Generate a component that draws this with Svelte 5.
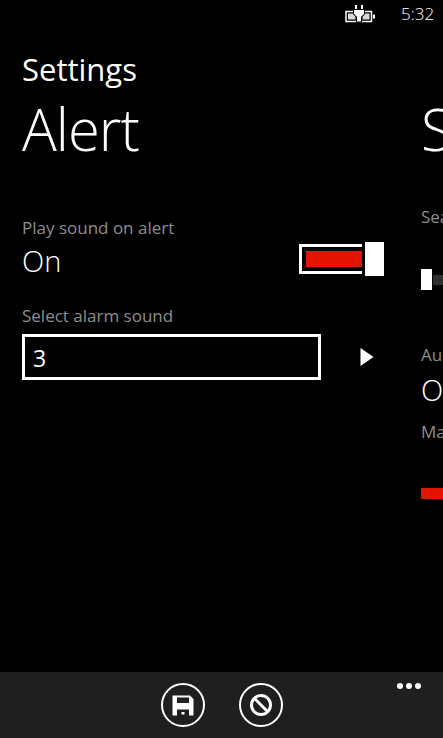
<script>
	let playSound = true;
	let alarmSound = "3";
</script>

<div class="phone">
	<header class="status">
		<svg class="battery" width="30" height="18" viewBox="0 0 30 18">
			<path d="M9 6.500H1V16.500H26.500V6.500H19" fill="none" stroke="#fff" stroke-width="1.500" />
			<path d="M3 8.500H8L10.500 12V14.500H3zM24.500 8.500H20L17.500 12V14.500H24.500z" fill="#d8d8d8" />
			<path d="M11 0V5M17 0V5" stroke="#fff" stroke-width="2" />
			<path d="M8.500 4.500H19.500V9L16.500 12V17H11.500V12L8.500 9z" fill="#fff" stroke="#000" stroke-width="1" />
			<rect x="28" y="9.500" width="2" height="4" fill="#fff" />
		</svg>
		<span class="time">5:32</span>
	</header>

	<main class="content">
		<h2>Settings</h2>
		<div class="panes">
			<section class="pane first">
				<h1>Alert</h1>
				<div class="toggle-row">
					<div>
						<div class="label">Play sound on alert</div>
						<div class="value on-value">{playSound ? "On" : "Off"}</div>
					</div>
					<div class="toggle">
						<div class="track"><div class="fill"></div></div>
						<div class="thumb"></div>
					</div>
				</div>
				<div class="label select-label">Select alarm sound</div>
				<div class="select-row">
					<div class="textbox">{alarmSound}</div>
					<svg class="play" width="14" height="18" viewBox="0 0 14 18"><path d="M0.500 0L13.500 9L0.500 18z" fill="#fff" /></svg>
				</div>
			</section>

			<section class="pane second">
				<h1>Search</h1>
				<div class="label search-label">Search</div>
				<div class="slider">
					<div class="slider-thumb"></div>
					<div class="slider-track"></div>
				</div>
				<div class="label auto-label">Auto</div>
				<div class="value auto-value">On</div>
				<div class="label max-label">Max</div>
				<div class="red-bar"></div>
			</section>
		</div>
	</main>

	<footer class="appbar">
		<div class="icon-btn">
			<svg width="22" height="21" viewBox="0 0 22 21">
				<path fill-rule="evenodd" d="M0.500 0.500H18L21.500 4V20.500H0.500zM5 2.500V8H17V2.500zM5 14.500V20.500H17V14.500z" fill="#fff" />
				<rect x="9.500" y="17" width="3" height="2.500" fill="#fff" />
			</svg>
		</div>
		<div class="icon-btn">
			<svg width="24" height="24" viewBox="0 0 24 24">
				<circle cx="12" cy="12" r="9.500" fill="none" stroke="#fff" stroke-width="3" />
				<path d="M5 5L19 19" stroke="#fff" stroke-width="3" />
			</svg>
		</div>
		<div class="dots"><i></i><i></i><i></i></div>
	</footer>
</div>

<style>
	:global(body) {
		margin: 0;
		background: #000;
	}
	.phone {
		width: 443px;
		height: 738px;
		display: flex;
		flex-direction: column;
		overflow: hidden;
		background: #000;
		color: #fff;
		font-family: "Open Sans", "Noto Sans", sans-serif;
		font-weight: 300;
	}
	.status {
		height: 30px;
		flex: none;
		display: flex;
		justify-content: flex-end;
		align-items: center;
		padding-right: 10px;
	}
	.battery {
		margin: -2px 26px 0 0;
	}
	.time {
		font-size: 17px;
		line-height: 28px;
		margin-bottom: 2px;
		width: 32px;
		white-space: nowrap;
	}
	.content {
		flex: 1;
		min-height: 0;
		padding-left: 22px;
	}
	h2 {
		margin: 19px 0 0;
		font-size: 31px;
		font-weight: 400;
		line-height: 40px;
	}
	h1 {
		margin: 0;
		font-size: 58px;
		font-weight: 300;
		line-height: 80px;
		letter-spacing: -1px;
	}
	.panes {
		display: flex;
		width: 800px;
	}
	.pane.first {
		width: 362px;
		flex: none;
		margin-right: 37px;
	}
	.label {
		font-size: 17px;
		line-height: 24px;
		color: #8e8e8e;
		font-weight: 400;
	}
	.value {
		font-size: 29px;
		line-height: 36px;
	}
	.on-value {
		margin-top: 3px;
	}
	.toggle-row {
		margin-top: 47px;
		display: flex;
		justify-content: space-between;
		align-items: flex-start;
	}
	.toggle {
		display: flex;
		align-items: center;
		gap: 3px;
		margin-top: 26px;
	}
	.track {
		width: 63px;
		height: 30px;
		box-sizing: border-box;
		border: 3px solid #fff;
		border-right: none;
		padding: 4px 0 4px 4px;
	}
	.fill {
		height: 100%;
		background: #e51400;
	}
	.thumb {
		width: 19px;
		height: 34px;
		background: #fff;
	}
	.select-label {
		margin-top: 25px;
	}
	.select-row {
		margin-top: 6px;
		display: flex;
		align-items: center;
	}
	.textbox {
		width: 299px;
		height: 46px;
		box-sizing: border-box;
		border: 3px solid #fff;
		padding-left: 8px;
		font-size: 23px;
		font-weight: 400;
		line-height: 42px;
	}
	.play {
		margin-left: 39px;
	}
	.second h1 {
		white-space: nowrap;
	}
	.search-label {
		margin-top: 36px;
	}
	.slider {
		margin-top: 40px;
		display: flex;
		align-items: center;
		gap: 1px;
	}
	.slider-thumb {
		width: 11px;
		height: 21px;
		background: #fff;
	}
	.slider-track {
		width: 60px;
		height: 10px;
		background: #2e2e2e;
	}
	.auto-label {
		margin-top: 53px;
	}
	.auto-value {
		margin-top: 5px;
	}
	.max-label {
		margin-top: 12px;
	}
	.red-bar {
		margin-top: 44px;
		width: 60px;
		height: 11px;
		background: #e51400;
	}
	.appbar {
		position: relative;
		flex: none;
		height: 66px;
		background: #1f1f1f;
		display: flex;
		justify-content: center;
		align-items: center;
		gap: 34px;
	}
	.icon-btn {
		width: 40px;
		height: 40px;
		border: 2px solid #fff;
		border-radius: 50%;
		display: flex;
		align-items: center;
		justify-content: center;
	}
	.dots {
		position: absolute;
		top: 11px;
		right: 22px;
		display: flex;
		gap: 3px;
	}
	.dots i {
		width: 6px;
		height: 6px;
		border-radius: 50%;
		background: #fff;
	}
</style>
